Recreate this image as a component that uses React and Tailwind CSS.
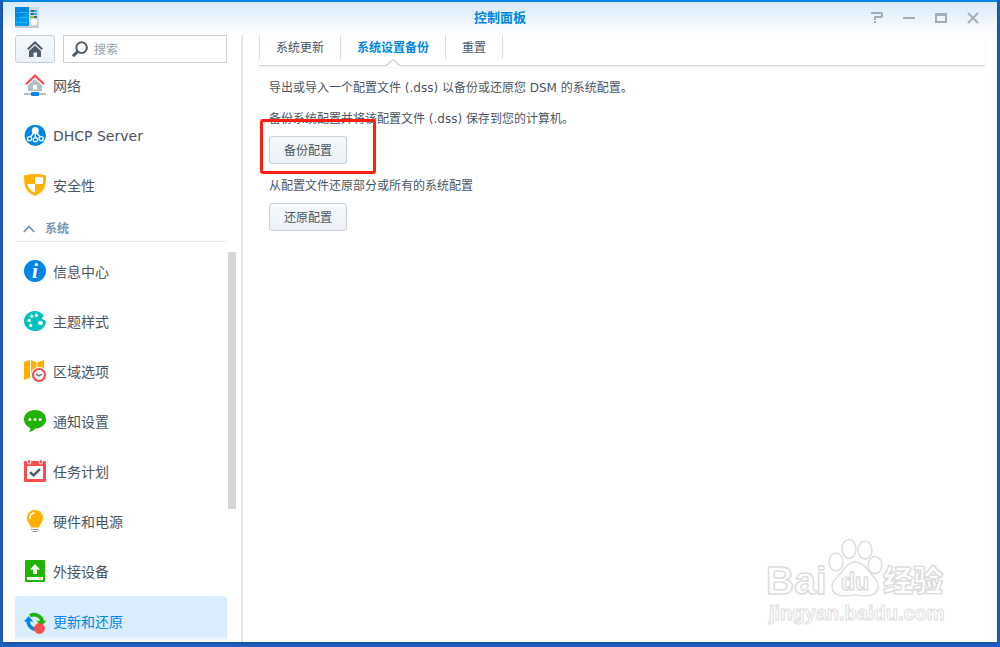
import { useState } from 'react'

const icons = {
  network: (
    <>
      <path d="M12 6 L19 12.5 V18 H5 V12.5 Z" fill="#b4bcc6" />
      <rect x="10" y="12" width="4" height="4.5" fill="#fff" />
      <path d="M3 11.2 L12 2.6 L21 11.2" fill="none" stroke="#ff4b4b" strokeWidth="2.2" />
      <rect x="1" y="20" width="22" height="2" fill="#b4bcc6" />
      <rect x="8" y="19" width="8" height="4" rx="1" fill="#0086e5" />
    </>
  ),
  dhcp: (
    <>
      <circle cx="12.3" cy="12.3" r="10.6" fill="#0086e5" />
      <circle cx="12.3" cy="7.6" r="3.5" fill="#fff" />
      <path d="M12.3 10 V14.5 M10.5 10 L7.5 14 M14.1 10 L17.1 14" stroke="#fff" strokeWidth="1.3" />
      <g fill="#0086e5" stroke="#fff" strokeWidth="1.3">
        <circle cx="6.5" cy="15.7" r="2.1" />
        <circle cx="12.3" cy="16.7" r="2.1" />
        <circle cx="18.1" cy="15.7" r="2.1" />
      </g>
    </>
  ),
  security: (
    <>
      <path d="M1 2.4 Q12 -0.4 23 2.4 Q23.2 12 20.6 16.2 Q18 20.3 12 23 Q6 20.3 3.4 16.2 Q0.8 12 1 2.4 Z" fill="#ffb000" />
      <path d="M12 3.8 Q16.5 3.8 20.2 4.6 Q20.2 8.5 19.6 11 H12 Z" fill="#fff" />
      <path d="M4.4 11 H12 V19.8 Q5.6 17 4.4 11 Z" fill="#fff" />
    </>
  ),
  info: (
    <>
      <circle cx="12" cy="12" r="11" fill="#0086e5" />
      <text x="12" y="18.5" textAnchor="middle" fontSize="21" fontWeight="bold" fontStyle="italic" fontFamily="'Liberation Serif', serif" fill="#fff">i</text>
    </>
  ),
  theme: (
    <>
      <path d="M20 5.5 C17.5 3 15 2 12 2 C6 2 1 6.3 1 12 C1 17.7 6 22 12 22 C17.5 22 21.5 19.5 23 13 C22.7 10.5 21 11.5 20 10.8 C18.7 9.8 18.3 8.7 20.5 7.6 Z" fill="#00bfbf" />
      <g fill="#fff">
        <circle cx="6.2" cy="11.4" r="1.7" />
        <circle cx="8.8" cy="7.2" r="1.6" />
        <circle cx="13.4" cy="6.4" r="1.6" />
        <circle cx="7.8" cy="16.4" r="1.6" />
        <ellipse cx="17.4" cy="14" rx="2.6" ry="2.1" />
      </g>
    </>
  ),
  region: (
    <>
      <path d="M1 3 L7 1 V19 L1 21 Z M8 1 L13.5 3.2 V20 L8 18.6 Z M14.5 3.2 L21 1 V18 L14.5 20 Z" fill="#ffb000" />
      <circle cx="16" cy="16" r="8" fill="#fff" />
      <circle cx="16" cy="16" r="6" fill="#fff" stroke="#f94c4c" strokeWidth="2.2" />
      <path d="M12.8 14.8 L15.8 17 L19 15" fill="none" stroke="#56616c" strokeWidth="1.4" />
    </>
  ),
  notify: (
    <>
      <path d="M12 1 C18.3 1 23 5 23 10.3 C23 15.5 18.5 19.2 12.5 19.6 Q10 22.6 6 23 Q7.6 21 7.3 18.9 C3.5 17.6 1 14.3 1 10.3 C1 5 5.7 1 12 1 Z" fill="#1fb400" />
      <g fill="#fff">
        <circle cx="6.9" cy="10.4" r="1.5" />
        <circle cx="12" cy="10.4" r="1.5" />
        <circle cx="17.1" cy="10.4" r="1.5" />
      </g>
    </>
  ),
  task: (
    <>
      <path d="M2 2 H22 Q23 2 23 3 V22 Q23 23 22 23 H2 Q1 23 1 22 V3 Q1 2 2 2 Z M4 7 V20 H20 V7 Z" fill="#f94c4c" fillRule="evenodd" />
      <g fill="#f94c4c" stroke="#fff">
        <rect x="4.7" y="0.7" width="3" height="4.2" rx="1" />
        <rect x="16.3" y="0.7" width="3" height="4.2" rx="1" />
      </g>
      <path d="M7 13.2 L10.5 16.4 L17 10.2" fill="none" stroke="#505c68" strokeWidth="2.5" />
    </>
  ),
  power: (
    <>
      <path d="M12 1 C16.6 1 20 4.4 20 8.8 C20 13 17 14.5 16.2 18.5 H7.8 C7 14.5 4 13 4 8.8 C4 4.4 7.4 1 12 1 Z" fill="#ffb000" />
      <path d="M6.8 9.4 Q7 5 11 3.8" fill="none" stroke="#fff" strokeWidth="1.5" strokeLinecap="round" />
      <path d="M8 20.5 H16 M9.5 22.5 H14.5" stroke="#8c97a3" />
    </>
  ),
  external: (
    <>
      <rect x="2" y="1" width="20" height="22" rx="1" fill="#1fb400" />
      <path d="M12 5 L17 10.5 H14 V15 H10 V10.5 H7 Z" fill="#fff" />
      <rect x="4" y="18" width="16" height="3" fill="#fff" />
      <rect x="16" y="19" width="2" height="1" fill="#ff9a00" />
    </>
  ),
  update: (
    <>
      <path d="M7 6.8 A8.2 8.2 0 0 1 19.2 12" fill="none" stroke="#1fb400" strokeWidth="3.6" />
      <path d="M13.5 11.8 H23.3 L18.4 17.5 Z" fill="#1fb400" />
      <path d="M5.2 11 A8.2 8.2 0 0 0 13 20.2" fill="none" stroke="#0086e5" strokeWidth="3.6" />
      <path d="M0.8 12.5 L5.8 7 L10.2 12.5 Z" fill="#0086e5" />
      <circle cx="16.4" cy="19.5" r="5.4" fill="#f94c4c" />
    </>
  ),
}

const topItems = [
  { id: 'network',  label: '网络' },
  { id: 'dhcp',     label: 'DHCP Server' },
  { id: 'security', label: '安全性' },
]

const systemItems = [
  { id: 'info',     label: '信息中心' },
  { id: 'theme',    label: '主题样式' },
  { id: 'region',   label: '区域选项' },
  { id: 'notify',   label: '通知设置' },
  { id: 'task',     label: '任务计划' },
  { id: 'power',    label: '硬件和电源' },
  { id: 'external', label: '外接设备' },
  { id: 'update',   label: '更新和还原' },
]

const tabs = ['系统更新', '系统设置备份', '重置']

const windowButtons = [
  { label: '帮助',   path: 'M0 1 H10 Q11 1 11 2 V4 Q11 5 10 5 H4 V8 M4 9 V11' },
  { label: '最小化', path: 'M0 6 H12' },
  { label: '最大化', path: 'M1 2 H11 V10 H1 Z M1 3 H11' },
  { label: '关闭',   path: 'M1 1 L11 11 M11 1 L1 11' },
]

function NavItem({ item, active, onSelect }) {
  return (
    <li>
      <a
        href={`#${item.id}`}
        onClick={() => onSelect(item.id)}
        className={`flex items-center gap-1.5 h-[50px] pl-2 rounded text-sm ${
          active ? 'bg-[#d9edff] text-[#0086e5]' : 'text-[#4b555f]'
        }`}
      >
        <svg viewBox="0 0 24 24" className="w-6 h-6 shrink-0 overflow-visible" aria-hidden="true">{icons[item.id]}</svg>
        <span className="pt-0.5">{item.label}</span>
      </a>
    </li>
  )
}

function PanelButton({ children }) {
  return (
    <button className="h-7 px-3.5 pt-0.5 border border-[#c6d1dc] rounded-[3px] bg-gradient-to-b from-[#f5f9fc] to-[#ebf1f7] text-xs text-[#4b555f]">
      {children}
    </button>
  )
}

function Watermark() {
  return (
    <svg viewBox="0 0 186 92" className="absolute right-[46px] bottom-[14px] w-[186px] h-[92px] pointer-events-none" aria-hidden="true">
      <g fill="#fff" stroke="#dcdcdc" strokeWidth="1.4" strokeLinejoin="round">
        <text x="1" y="58" fontSize="39" fontWeight="bold" fontFamily="'Liberation Sans', sans-serif">Bai</text>
        <ellipse cx="71" cy="26" rx="7" ry="9" />
        <ellipse cx="84" cy="13" rx="7" ry="9.5" />
        <ellipse cx="100" cy="14" rx="7" ry="9" />
        <ellipse cx="110" cy="29" rx="7" ry="8.5" />
        <path d="M90 26 C98 26 102 33 107 39 C113 45 115 50 112 55 C108 61 100 60 90 59 C80 60 72 61 68 55 C65 49 68 44 74 39 C79 34 82 26 90 26 Z" />
        <text x="76" y="54" fontSize="23" fontWeight="bold" fontFamily="'Liberation Sans', sans-serif">du</text>
        <text x="118" y="55" fontSize="30" fontWeight="900" fontFamily="'Noto Sans CJK SC', sans-serif">经验</text>
      </g>
      <text x="4" y="84" fontSize="20" fontWeight="bold" fontFamily="'Liberation Sans', sans-serif" fill="#fff" stroke="#dedede" strokeWidth="1">jingyan.baidu.com</text>
    </svg>
  )
}

export default function App() {
  const [current, setCurrent] = useState('update')
  const [tab, setTab]         = useState('系统设置备份')

  return (
    <div className="h-screen px-[3px] pb-[5px] bg-[#1f63c4] font-['DejaVu_Sans','Noto_Sans_CJK_SC',sans-serif] text-[#4b555f]">
      <div className="relative h-full flex flex-col bg-white border-t-2 border-[#0086e5] shadow-[0_0_5px_rgba(0,0,0,0.4)] overflow-hidden">

        {/* ── TITLE BAR ── */}
        <header className="h-[33px] shrink-0 grid grid-cols-[1fr_auto_1fr] items-center px-3 pb-0.5 bg-gradient-to-b from-[#d6eaf9] to-white">
          <svg viewBox="0 0 24 21" className="w-6 h-[21px]" aria-hidden="true">
            <rect x="0" y="19" width="24" height="2" fill="#c4cad0" />
            <rect x="0" y="0" width="14" height="19" fill="#0086e5" />
            <path d="M0 19 V13 L14 4 V19 Z" fill="#009bea" />
            <path d="M4 5.5 H12 M4 10.5 H12 M4 15.5 H12 M1 5.5 H2 M1 10.5 H2 M1 15.5 H3" stroke="#29b8f5" />
            <rect x="14" y="0" width="10" height="19" fill="#d3d9de" />
            <path d="M15.5 4 H22 M15.5 10 H22" stroke="#2a3d4d" strokeWidth="1.6" />
            <path d="M15.5 7 H19" stroke="#2a3d4d" strokeWidth="1.6" />
            <path d="M19 4 H22 M18.5 7 H22" stroke="#19b4f0" strokeWidth="2" />
            <path d="M15.5 10 H19" stroke="#8ccc1a" strokeWidth="2" />
            <circle cx="19" cy="15" r="3" fill="#fff" />
          </svg>
          <h1 className="text-[13px] font-bold text-[#0086e5]">控制面板</h1>
          <div className="flex justify-end gap-5 pr-1.5">
            {windowButtons.map(b => (
              <button key={b.label} aria-label={b.label} className="w-3 h-3">
                <svg viewBox="0 0 12 12" className="w-3 h-3 overflow-visible" fill="none" stroke="#a3adb8" strokeWidth="2">
                  <path d={b.path} />
                </svg>
              </button>
            ))}
          </div>
        </header>

        <div className="flex-1 min-h-0 flex">

          {/* ── SIDEBAR ── */}
          <aside className="w-60 shrink-0 flex flex-col pl-3 border-r-2 border-[#e4e6e8]">
            <div className="flex gap-2 pr-3.5">
              <button aria-label="主页" className="w-10 h-7 flex items-center justify-center border border-[#c6d1dc] rounded-[3px] bg-gradient-to-b from-[#f5f9fc] to-[#ebf1f7]">
                <svg viewBox="0 0 16 16" className="w-4 h-4" aria-hidden="true">
                  <path d="M0.8 8.2 L8 1.4 L15.2 8.2" fill="none" stroke="#505c68" strokeWidth="2" />
                  <path d="M8 4.4 L14 10 V16 H10 V11.5 H6.5 V16 H2 V10 Z" fill="#505c68" />
                </svg>
              </button>
              <label className="flex-1 min-w-0 h-7 flex items-center gap-1.5 pl-2 border border-[#c6d1dc]">
                <svg viewBox="0 0 16 16" className="w-4 h-4 shrink-0" fill="none" stroke="#505c68" aria-hidden="true">
                  <circle cx="9.6" cy="6.6" r="5.3" strokeWidth="2" />
                  <path d="M5.6 10.6 L1 15.2" strokeWidth="3" />
                </svg>
                <input type="text" aria-label="搜索" placeholder="搜索" className="w-full min-w-0 pt-0.5 text-xs outline-none placeholder:text-[#96a0aa]" />
              </label>
            </div>

            <div className="flex-1 min-h-0 flex gap-px">
              <nav className="relative flex-1 overflow-hidden">
                <div className="-mt-[3px]">
                  <ul>
                    {topItems.map(item => (
                      <NavItem key={item.id} item={item} active={current === item.id} onSelect={setCurrent} />
                    ))}
                  </ul>
                  <h2 className="flex items-center gap-2.5 h-8 mb-1 pl-2 pt-1.5 border-b border-[#e6eaed] text-xs font-bold text-[#7397b5]">
                    <svg viewBox="0 0 12 8" className="w-3 h-2" fill="none" stroke="#7397b5" strokeWidth="1.8" aria-hidden="true">
                      <path d="M0.8 7 L6 1.6 L11.2 7" />
                    </svg>
                    系统
                  </h2>
                  <ul>
                    {systemItems.map(item => (
                      <NavItem key={item.id} item={item} active={current === item.id} onSelect={setCurrent} />
                    ))}
                  </ul>
                </div>
                <div className="absolute inset-x-0 bottom-0 h-1.5 bg-gradient-to-b from-white/0 to-white pointer-events-none" />
              </nav>
              <div className="w-2 mr-[5px] h-[257px] mt-[189px] bg-[#d3d4d6]" />
            </div>
          </aside>

          {/* ── CONTENT ── */}
          <main className="flex-1 min-w-0 pl-4 pr-3 text-xs">
            <div role="tablist" className="flex h-[31px] border-b border-[#d3d5d7] shadow-[0_1px_2px_rgba(0,0,0,0.08)]">
              {tabs.map(t => (
                <button
                  key={t}
                  role="tab"
                  aria-selected={tab === t}
                  onClick={() => setTab(t)}
                  className={`relative h-6 px-4 pt-0.5 border-r border-[#d5dfe9] first:border-l ${
                    tab === t ? 'font-bold text-[#0086e5]' : ''
                  }`}
                >
                  {t}
                  {tab === t && (
                    <svg viewBox="0 0 14 8" className="absolute left-1/2 -translate-x-1/2 top-6 w-3.5 h-2" aria-hidden="true">
                      <path d="M0 8 V7 L7 0.5 L14 7 V8 Z" fill="#fff" />
                      <path d="M0 6.8 L7 0.7 L14 6.8" fill="none" stroke="#d0d3d6" strokeWidth="1.4" />
                    </svg>
                  )}
                </button>
              ))}
            </div>

            <section className="px-2.5 pt-3.5">
              <p className="leading-4">导出或导入一个配置文件 (.dss) 以备份或还原您 DSM 的系统配置。</p>
              <p className="leading-4 mt-[15px] mb-[9px]">备份系统配置并将该配置文件 (.dss) 保存到您的计算机。</p>
              <div className="relative w-fit">
                <PanelButton>备份配置</PanelButton>
                <div className="absolute -left-[9px] -right-[29px] -top-[17px] -bottom-[10px] border-3 border-[#ff1e10] rounded-[3px] pointer-events-none" />
              </div>
              <p className="leading-4 mt-[14px] mb-[9px]">从配置文件还原部分或所有的系统配置</p>
              <PanelButton>还原配置</PanelButton>
            </section>
          </main>
        </div>

        <Watermark />
      </div>
    </div>
  )
}
